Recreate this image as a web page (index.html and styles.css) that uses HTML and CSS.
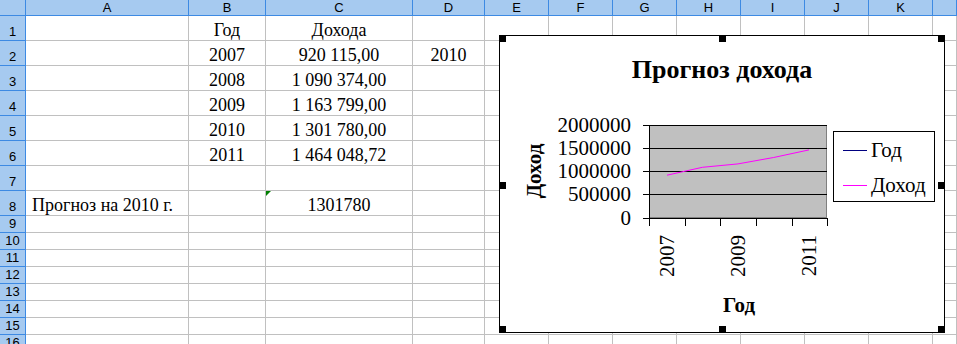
FILE: index.html
```html
<!DOCTYPE html>
<html>
<head>
    <meta charset="utf-8">
    <title>Прогноз дохода</title>
    <link rel="stylesheet" href="styles.css">
</head>
<body>
    <div class="sheet">
        <div class="h"></div><div class="h">A</div><div class="h">B</div><div class="h">C</div><div class="h">D</div><div class="h">E</div><div class="h">F</div><div class="h">G</div><div class="h">H</div><div class="h">I</div><div class="h">J</div><div class="h">K</div><div class="h"></div>

        <div class="r">1</div><div class="c"></div><div class="c">Год</div><div class="c">Дохода</div><div class="c"></div><div class="c"></div><div class="c"></div><div class="c"></div><div class="c"></div><div class="c"></div><div class="c"></div><div class="c"></div><div class="c"></div>
        <div class="r">2</div><div class="c"></div><div class="c">2007</div><div class="c">920 115,00</div><div class="c">2010</div><div class="c"></div><div class="c"></div><div class="c"></div><div class="c"></div><div class="c"></div><div class="c"></div><div class="c"></div><div class="c"></div>
        <div class="r">3</div><div class="c"></div><div class="c">2008</div><div class="c">1 090 374,00</div><div class="c"></div><div class="c"></div><div class="c"></div><div class="c"></div><div class="c"></div><div class="c"></div><div class="c"></div><div class="c"></div><div class="c"></div>
        <div class="r">4</div><div class="c"></div><div class="c">2009</div><div class="c">1 163 799,00</div><div class="c"></div><div class="c"></div><div class="c"></div><div class="c"></div><div class="c"></div><div class="c"></div><div class="c"></div><div class="c"></div><div class="c"></div>
        <div class="r">5</div><div class="c"></div><div class="c">2010</div><div class="c">1 301 780,00</div><div class="c"></div><div class="c"></div><div class="c"></div><div class="c"></div><div class="c"></div><div class="c"></div><div class="c"></div><div class="c"></div><div class="c"></div>
        <div class="r">6</div><div class="c"></div><div class="c">2011</div><div class="c">1 464 048,72</div><div class="c"></div><div class="c"></div><div class="c"></div><div class="c"></div><div class="c"></div><div class="c"></div><div class="c"></div><div class="c"></div><div class="c"></div>
        <div class="r">7</div><div class="c"></div><div class="c"></div><div class="c"></div><div class="c"></div><div class="c"></div><div class="c"></div><div class="c"></div><div class="c"></div><div class="c"></div><div class="c"></div><div class="c"></div><div class="c"></div>
        <div class="r">8</div><div class="c left">Прогноз на 2010 г.</div><div class="c"></div><div class="c flagged"><span class="flag"></span>1301780</div><div class="c"></div><div class="c"></div><div class="c"></div><div class="c"></div><div class="c"></div><div class="c"></div><div class="c"></div><div class="c"></div><div class="c"></div>
        <div class="r">9</div><div class="c"></div><div class="c"></div><div class="c"></div><div class="c"></div><div class="c"></div><div class="c"></div><div class="c"></div><div class="c"></div><div class="c"></div><div class="c"></div><div class="c"></div><div class="c"></div>
        <div class="r">10</div><div class="c"></div><div class="c"></div><div class="c"></div><div class="c"></div><div class="c"></div><div class="c"></div><div class="c"></div><div class="c"></div><div class="c"></div><div class="c"></div><div class="c"></div><div class="c"></div>
        <div class="r">11</div><div class="c"></div><div class="c"></div><div class="c"></div><div class="c"></div><div class="c"></div><div class="c"></div><div class="c"></div><div class="c"></div><div class="c"></div><div class="c"></div><div class="c"></div><div class="c"></div>
        <div class="r">12</div><div class="c"></div><div class="c"></div><div class="c"></div><div class="c"></div><div class="c"></div><div class="c"></div><div class="c"></div><div class="c"></div><div class="c"></div><div class="c"></div><div class="c"></div><div class="c"></div>
        <div class="r">13</div><div class="c"></div><div class="c"></div><div class="c"></div><div class="c"></div><div class="c"></div><div class="c"></div><div class="c"></div><div class="c"></div><div class="c"></div><div class="c"></div><div class="c"></div><div class="c"></div>
        <div class="r">14</div><div class="c"></div><div class="c"></div><div class="c"></div><div class="c"></div><div class="c"></div><div class="c"></div><div class="c"></div><div class="c"></div><div class="c"></div><div class="c"></div><div class="c"></div><div class="c"></div>
        <div class="r">15</div><div class="c"></div><div class="c"></div><div class="c"></div><div class="c"></div><div class="c"></div><div class="c"></div><div class="c"></div><div class="c"></div><div class="c"></div><div class="c"></div><div class="c"></div><div class="c"></div>
        <div class="r">16</div><div class="c"></div><div class="c"></div><div class="c"></div><div class="c"></div><div class="c"></div><div class="c"></div><div class="c"></div><div class="c"></div><div class="c"></div><div class="c"></div><div class="c"></div><div class="c"></div>
    </div>

    <!-- диаграмма поверх ячеек -->
    <div class="chart">
        <svg class="plot" width="444" height="296" viewBox="1 1 444 296">
            <text class="title" x="223" y="43" text-anchor="middle">Прогноз дохода</text>

            <rect x="150.5" y="90.5" width="177" height="92" fill="#c0c0c0" stroke="#808080"/>
            <g stroke="#000" stroke-width="1">
                <line x1="150" y1="90.5" x2="328" y2="90.5"/>
                <line x1="150" y1="113.5" x2="328" y2="113.5"/>
                <line x1="150" y1="136.5" x2="328" y2="136.5"/>
                <line x1="150" y1="159.5" x2="328" y2="159.5"/>
                <line x1="144" y1="183.5" x2="328" y2="183.5"/>
                <line x1="150.5" y1="90" x2="150.5" y2="191"/>
                <line x1="144" y1="90.5" x2="150" y2="90.5"/>
                <line x1="144" y1="113.5" x2="150" y2="113.5"/>
                <line x1="144" y1="136.5" x2="150" y2="136.5"/>
                <line x1="144" y1="159.5" x2="150" y2="159.5"/>
                <line x1="186.5" y1="183" x2="186.5" y2="191"/>
                <line x1="221.5" y1="183" x2="221.5" y2="191"/>
                <line x1="257.5" y1="183" x2="257.5" y2="191"/>
                <line x1="293.5" y1="183" x2="293.5" y2="191"/>
                <line x1="328.5" y1="183" x2="328.5" y2="191"/>
            </g>

            <polyline points="168,140.2 203.4,132.3 239,128.9 274.6,122.5 310,114.9" fill="none" stroke="#ff00ff" stroke-width="1"/>

            <g class="axis" text-anchor="end">
                <text x="132" y="97">2000000</text>
                <text x="132" y="120">1500000</text>
                <text x="132" y="143">1000000</text>
                <text x="132" y="166">500000</text>
                <text x="132" y="190">0</text>
                <text transform="translate(175 200) rotate(-90)">2007</text>
                <text transform="translate(246 200) rotate(-90)">2009</text>
                <text transform="translate(317 200) rotate(-90)">2011</text>
            </g>

            <text class="label" transform="translate(42 136) rotate(-90)" text-anchor="middle">Доход</text>
            <text class="label" x="240" y="277" text-anchor="middle">Год</text>

            <rect x="334.5" y="96.5" width="101" height="70" fill="#fff" stroke="#000"/>
            <line x1="344" y1="115.5" x2="368" y2="115.5" stroke="#000080"/>
            <line x1="344" y1="150.5" x2="368" y2="150.5" stroke="#ff00ff"/>
            <text class="axis" x="372" y="122">Год</text>
            <text class="axis" x="372" y="157">Доход</text>
        </svg>
        <span class="handle tl"></span>
        <span class="handle tm"></span>
        <span class="handle tr"></span>
        <span class="handle ml"></span>
        <span class="handle mr"></span>
        <span class="handle bl"></span>
        <span class="handle bm"></span>
        <span class="handle br"></span>
    </div>
</body>
</html>
```

FILE: styles.css
```css
body {
    margin: 0;
    overflow: hidden;
    background-color: #fff;
}

.sheet {
    display: grid;
    grid-template-columns: 26px 163px 77px 147px 72px repeat(7, 64px) 1fr;
    grid-template-rows: 16px repeat(8, 25px) repeat(8, 17px);
}

.h,
.r {
    box-sizing: border-box;
    background-color: #a6caf0;
    border-right: 1px solid #3d8ae3;
    border-bottom: 1px solid #3d8ae3;
    font: 13px/15px "Liberation Sans", Arial, sans-serif;
    color: #000;
    display: flex;
    align-items: center;
    justify-content: center;
}

.r {
    align-items: flex-end;
    padding-bottom: 1px;
}

.c {
    position: relative;
    box-sizing: border-box;
    border-right: 1px solid #c0c0c0;
    border-bottom: 1px solid #c0c0c0;
    font: 18px/18px "Liberation Serif", "Times New Roman", serif;
    color: #000;
    white-space: nowrap;
    display: flex;
    align-items: flex-end;
    justify-content: center;
    padding-bottom: 1px;
}

.c.left {
    justify-content: flex-start;
    padding-left: 6px;
}

.flag {
    position: absolute;
    top: 0;
    left: 0;
    width: 0;
    height: 0;
    border-top: 5px solid #008000;
    border-right: 5px solid transparent;
}

.chart {
    position: absolute;
    left: 499px;
    top: 35px;
    width: 446px;
    height: 298px;
    box-sizing: border-box;
    border: 1px solid #000;
    background-color: #fff;
}

.plot {
    display: block;
}

.title {
    font: bold 26px "Liberation Serif", "Times New Roman", serif;
}

.axis {
    font: 21px "Liberation Serif", "Times New Roman", serif;
}

.label {
    font: bold 21px "Liberation Serif", "Times New Roman", serif;
}

.handle {
    position: absolute;
    width: 7px;
    height: 7px;
    background-color: #000;
}

.tl { top: -1px; left: -1px; }
.tm { top: -1px; left: 219px; }
.tr { top: -1px; right: -1px; }
.ml { top: 146px; left: -1px; }
.mr { top: 146px; right: -1px; }
.bl { bottom: -1px; left: -1px; }
.bm { bottom: -1px; left: 219px; }
.br { bottom: -1px; right: -1px; }
```
